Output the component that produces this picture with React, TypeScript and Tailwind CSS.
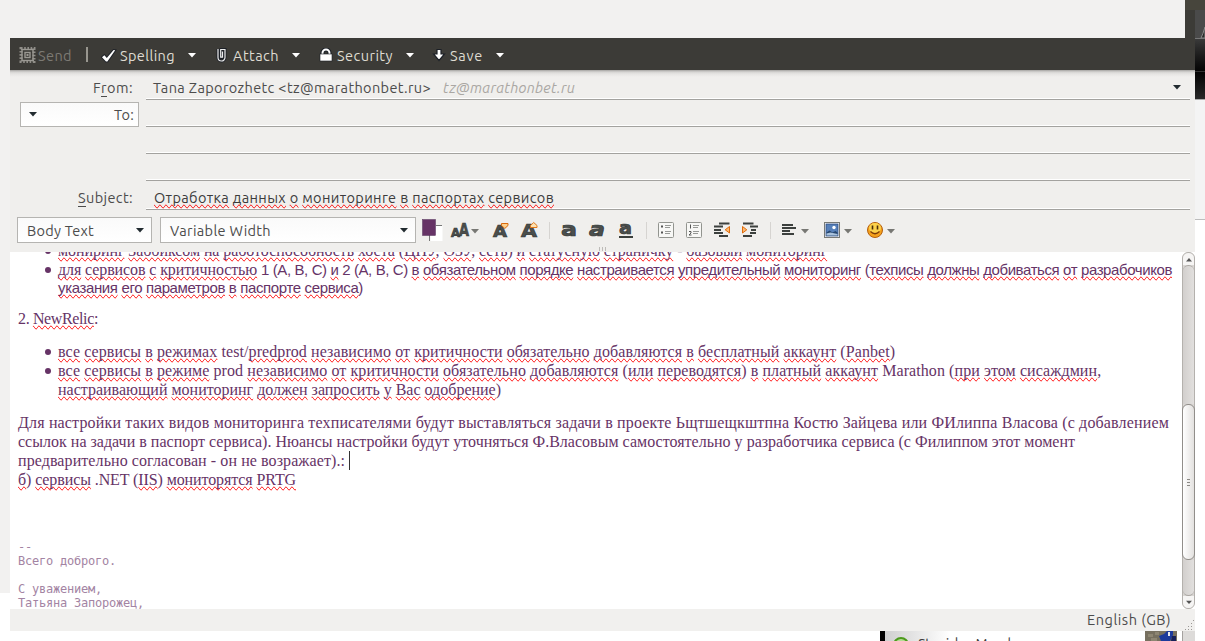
import React, { useLayoutEffect, useRef, useState } from 'react';

interface FitProps {
  width: number;
  className?: string;
  children: React.ReactNode;
}

// Tracks the text so that it fills exactly `width` pixels
function Fit({ width, className = '', children }: FitProps) {
  const ref = useRef<HTMLSpanElement>(null);
  const [spacing, setSpacing] = useState(0);

  useLayoutEffect(() => {
    const el = ref.current;
    if (!el) return;
    el.style.letterSpacing = '0px';
    const natural = el.getBoundingClientRect().width;
    const count = el.textContent?.length || 1;
    const next = (width - natural) / count;
    el.style.letterSpacing = `${next}px`;
    setSpacing(next);
  }, [width]);

  return (
    <span ref={ref} className={`inline-block whitespace-pre ${className}`} style={{ letterSpacing: spacing }}>
      {children}
    </span>
  );
}

const KNOWN_WORDS = ['test', 'prod', 'Marathon', 'NET', 'A', 'B', 'C'];

function Spelled({ text }: { text: string }) {
  return (
    <>
      {text.split(/([A-Za-zА-Яа-яёЁ]+)/).map((part, i) =>
        i % 2 === 1 && !KNOWN_WORDS.includes(part) ? (
          <span key={i} className="[text-decoration-line:spelling-error]">{part}</span>
        ) : (
          <React.Fragment key={i}>{part}</React.Fragment>
        )
      )}
    </>
  );
}

function Caret({ className = '', color = '#ffffff' }: { className?: string; color?: string }) {
  return (
    <svg className={`shrink-0 ${className}`} width="8" height="5" viewBox="0 0 8 5">
      <path d="M0 0h8L4 4.6z" fill={color} />
    </svg>
  );
}

function ToolSeparator({ className = '' }: { className?: string }) {
  return <div className={`h-[17px] w-px shrink-0 bg-[#d6d4d1] ${className}`} />;
}

function MainToolbar() {
  const label = 'h-5 leading-5 text-[#dfdbd2]';
  return (
    <div className="flex h-8 items-center bg-[#3c3b37] pt-[4px] pl-[9px] text-[14.5px]">
      <svg width="17" height="16" viewBox="0 0 17 16" fill="none" className="mb-[2px] shrink-0">
        <rect x="2" y="1.500" width="13" height="13" stroke="#8f8d88" strokeWidth="3" strokeDasharray="1.600 1.600" />
        <rect x="3" y="2.500" width="11" height="11" stroke="#9b9993" strokeWidth="1.400" />
        <rect x="6" y="5.500" width="5" height="5" stroke="#9b9993" strokeWidth="1.400" />
        <rect x="7.500" y="7" width="2" height="2" fill="#9b9993" />
      </svg>
      <Fit width={34} className="ml-[2px] h-5 leading-5 text-[#7c7a74]">Send</Fit>
      <div className="mb-[4px] ml-[14px] h-[15px] w-[2px] bg-[#98968f]" />
      <svg className="ml-[13px] shrink-0" width="16" height="14" viewBox="0 0 16 14">
        <path d="M1 8.2 3.4 6.2 5.8 9 12.6 1l1.6.2L6.4 12.6H5z" fill="#fff" stroke="#22252a" strokeWidth="2" paintOrder="stroke" />
      </svg>
      <Fit width={55} className={`ml-[3px] ${label}`}>Spelling</Fit>
      <Caret className="mb-[2px] ml-[13px]" />
      <svg className="mb-px ml-[20px] shrink-0" width="11" height="15" viewBox="0 0 11 15" fill="none">
        <path d="M2 1v8.5a3.5 3.5 0 0 0 7 0V1H5v8.5h1.500V3" stroke="#1c2027" strokeWidth="3" />
        <path d="M2 1v8.500a3.500 3.500 0 0 0 7 0V1.500H4.700v7.600h1.800V3.500" stroke="#eee" strokeWidth="1.200" />
      </svg>
      <Fit width={46} className={`ml-[6px] ${label}`}>Attach</Fit>
      <Caret className="mb-[2px] ml-[13px]" />
      <svg className="mb-[2px] ml-[19px] shrink-0" width="14" height="14" viewBox="0 0 14 14">
        <path d="M3.500 7V5a3.500 3.500 0 0 1 7 0v2" fill="none" stroke="#1c2027" strokeWidth="4" />
        <path d="M3.500 7V5a3.500 3.500 0 0 1 7 0v2" fill="none" stroke="#fff" strokeWidth="2" />
        <rect x="1" y="6" width="12" height="7" fill="#fff" stroke="#1c2027" strokeWidth=".6" />
      </svg>
      <Fit width={56} className={`ml-[4px] ${label}`}>Security</Fit>
      <Caret className="mb-[2px] ml-[13px]" />
      <svg className="mb-[2px] ml-[18px] shrink-0" width="14" height="14" viewBox="0 0 14 14">
        <path d="M5 1.500h4V6h3.500L7 12.500 1.500 6H5z" fill="#fff" stroke="#1c2027" strokeWidth="1.200" />
      </svg>
      <Fit width={33} className={`ml-[4px] ${label}`}>Save</Fit>
      <Caret className="mb-[2px] ml-[13px]" />
    </div>
  );
}

function Field({ className, children }: { className: string; children?: React.ReactNode }) {
  return (
    <div className={`ml-[13px] flex w-[1044px] items-center border-b border-[#a3a29f] shadow-[inset_0_-1px_0_#ffffff] ${className}`}>
      {children}
    </div>
  );
}

function Headers() {
  return (
    <div className="flex flex-col">
      <div className="flex h-[30px]">
        <div className="w-[123px] pt-[7px] text-right leading-[21px]">
          <Fit width={40}>F<span className="border-b border-[#4c4c4c]">r</span>om:</Fit>
        </div>
        <Field className="pt-[7px] pb-px pl-[7px] leading-[20px]">
          <Fit width={278}>{'Tana Zaporozhetc <tz@marathonbet.ru>'}</Fit>
          <Fit width={132} className="ml-[12px] text-[#aaa7a3] italic">tz@marathonbet.ru</Fit>
          <Caret color="#222b30" className="mr-[9px] ml-auto" />
        </Field>
      </div>
      <div className="flex h-[27px]">
        <div className="w-[123px] pt-[2px] pl-[10px]">
          <div className="flex h-[25px] w-[119px] items-center justify-between border border-[#b5b4b1] bg-linear-to-b from-[#fafafa] to-[#fff] pr-[4px] pl-[8px]">
            <Caret color="#222b30" />
            <Fit width={20}>To:</Fit>
          </div>
        </div>
        <Field className="" />
      </div>
      <div className="flex h-[27px] pl-[123px]"><Field className="" /></div>
      <div className="flex h-[27px] pl-[123px]"><Field className="" /></div>
      <div className="flex h-[29px]">
        <div className="w-[123px] pt-[6px] text-right leading-[21px]">
          <Fit width={55}><span className="border-b border-[#4c4c4c]">S</span>ubject:</Fit>
        </div>
        <Field className="pt-[5px] pl-[8px] leading-[20px] text-[#3c3c3c]">
          <Fit width={400}>
            <Spelled text="Отработка данных о мониторинге в паспортах сервисов" />
          </Fit>
        </Field>
      </div>
    </div>
  );
}

function Select({ label, textWidth, className }: { label: string; textWidth: number; className: string }) {
  return (
    <div className={`flex h-[26px] shrink-0 items-center justify-between border border-[#b5b4b1] bg-linear-to-b from-[#fafafa] to-[#fff] pt-px pr-[7px] pl-[9px] ${className}`}>
      <Fit width={textWidth}>{label}</Fit>
      <Caret color="#222b30" className="mb-px" />
    </div>
  );
}

// Small svg wrapper shared by the 16px formatting icons
function Icon({ className = '', children }: { className?: string; children: React.ReactNode }) {
  return (
    <svg className={`shrink-0 overflow-visible ${className}`} width="16" height="16" viewBox="0 0 16 16" fill="none">
      {children}
    </svg>
  );
}

const glyph = {
  fontFamily: 'DejaVu Sans',
  fontWeight: 700,
  fill: '#4b4f4d',
  stroke: '#353837',
  strokeWidth: 0.7,
};

function FormatToolbar() {
  return (
    <div className="flex h-[42px] items-start pt-[7px] pl-[7px]">
      <Select label="Body Text" textWidth={67} className="w-[135px]" />
      <Select label="Variable Width" textWidth={101} className="ml-[8px] w-[256px]" />
      <div className="flex h-[26px] items-center">
        <svg className="ml-[6px] shrink-0" width="22" height="25" viewBox="0 0 22 25">
          <path d="M8.500 8h12v15h-12z" fill="#fff" />
          <path d="M7.500 17v6M14 7.500h6" stroke="#777" />
          <rect x=".5" y="1.500" width="13" height="16" fill="#663366" stroke="#52305a" strokeWidth=".5" />
        </svg>
        <Icon className="ml-[7px]">
          <text x="0" y="15" fontSize="13" textLength="9" lengthAdjust="spacingAndGlyphs" {...glyph}>A</text>
          <text x="8" y="14" fontSize="17" textLength="10" lengthAdjust="spacingAndGlyphs" {...glyph}>A</text>
        </Icon>
        <Caret color="#777773" className="mt-[3px] ml-[4px]" />
        <Icon className="ml-[14px]">
          <text x="0" y="14.500" fontSize="16" textLength="14" lengthAdjust="spacingAndGlyphs" {...glyph}>A</text>
          <path d="M8.500 1.500h6.500v2l-3.200 3-3.300-3z" fill="#fbd08e" stroke="#d9690c" />
        </Icon>
        <Icon className="ml-[12px]">
          <text x="0" y="15" fontSize="18" textLength="16" lengthAdjust="spacingAndGlyphs" {...glyph}>A</text>
          <path d="M9.500 5.500v-2l3.200-3 3.300 3v2z" fill="#fce2b4" stroke="#e07818" />
        </Icon>
        <ToolSeparator className="ml-[12px]" />
        <Icon className="ml-[11px]">
          <text x="0" y="13.500" fontSize="20" textLength="16" lengthAdjust="spacingAndGlyphs" {...glyph}>a</text>
        </Icon>
        <Icon className="ml-[12px]">
          <text x="0" y="13.500" fontSize="20" fontStyle="italic" textLength="16" lengthAdjust="spacingAndGlyphs" {...glyph}>a</text>
        </Icon>
        <Icon className="ml-[13px]">
          <text x="1" y="12" fontSize="18" textLength="13" lengthAdjust="spacingAndGlyphs" {...glyph}>a</text>
          <path d="M1 15h14" stroke="#3b3f3c" strokeWidth="2" />
        </Icon>
        <ToolSeparator className="ml-[12px]" />
        <Icon className="ml-[11px]">
          <rect x=".5" y=".5" width="15" height="15" rx="1" fill="#f7f7f5" stroke="#92948f" />
          <path d="M3 4.500h2M3 10.500h2" stroke="#555" strokeWidth="2" />
          <path d="M7 3.500h6M7 5.500h5M7 9.500h6M7 11.500h5" stroke="#969895" />
        </Icon>
        <Icon className="ml-[12px]">
          <rect x=".5" y=".5" width="15" height="15" rx="1" fill="#f7f7f5" stroke="#92948f" />
          <path d="M4.500 2.500v4M3 9.500h2v1.500l-2 2h2.500" stroke="#555" />
          <path d="M7 3.500h6M7 5.500h5M7 9.500h6M7 11.500h5" stroke="#969895" />
        </Icon>
        <Icon className="ml-[12px]">
          <path d="M5 1.500h10.500M0 4.500h9M0 8h7M0 11h9M5 14h9" stroke="#3c403e" strokeWidth="2" />
          <path d="M15.500 4.500v6.500l-4.300-3.200z" fill="#fbb871" stroke="#e06c0c" />
        </Icon>
        <Icon className="ml-[12px]">
          <path d="M1 1.500h10.500M8 4.500h8M9 8h5M8 11h6M1 14h9" stroke="#3c403e" strokeWidth="2" />
          <path d="M.5 4.500v6.500l4.300-3.200z" fill="#fbb871" stroke="#e06c0c" />
        </Icon>
        <ToolSeparator className="ml-[12px]" />
        <Icon className="ml-[11px]">
          <path d="M0 3h11M0 6h14M0 9h8M0 12h12" stroke="#3c403e" strokeWidth="2" />
        </Icon>
        <Caret color="#777773" className="mt-[3px] ml-[3px]" />
        <Icon className="ml-[15px]">
          <rect x=".5" y=".5" width="15" height="15" fill="#fff" stroke="#777975" />
          <rect x="2" y="2" width="12" height="12" fill="#5680ba" stroke="#2d4c80" strokeWidth=".8" />
          <path d="M2.500 13.500v-3l3-2 3 2 3-1.500 2 1.500v3z" fill="#26466f" />
          <path d="M2.500 13.500v-2l4-1 7 1.500v1.500z" fill="#a9c2dc" />
          <circle cx="10" cy="5.500" r="1.700" fill="#fff" />
        </Icon>
        <Caret color="#777773" className="mt-[3px] ml-[4px]" />
        <Icon className="ml-[15px]">
          <circle cx="8" cy="8" r="7.500" fill="#f5a11c" stroke="#b5600e" />
          <ellipse cx="8" cy="6" rx="6" ry="5" fill="#fcd24c" />
          <path d="M5.500 3.500v4M10.500 3.500v4" stroke="#4a2c0a" strokeWidth="1.600" />
          <path d="M3.500 9.500q4.500 4.500 9 0" stroke="#7a3a08" strokeWidth="1.200" />
        </Icon>
        <Caret color="#777773" className="mt-[3px] ml-[4px]" />
      </div>
    </div>
  );
}

interface LineProps {
  width: number;
  text: string;
  spelled?: boolean;
}

function SerifLine({ width, text, spelled = true }: LineProps) {
  return (
    <div className="flex h-[19px] leading-[19px]">
      <Fit width={width}>{spelled ? <Spelled text={text} /> : text}</Fit>
    </div>
  );
}

function Bullet({ children }: { children: React.ReactNode }) {
  return (
    <li className="flex">
      <div className="mt-[7px] mr-[7px] ml-[27px] size-[6px] shrink-0 rounded-full bg-[#663366]" />
      <div>{children}</div>
    </li>
  );
}

function MessageBody() {
  return (
    <div className="h-[357px] w-[1172px] overflow-hidden bg-white pl-[8px] font-['Century_Schoolbook_L','Liberation_Serif',serif] text-[16px] text-[#663366]">
      <ul className="-mt-[11px]">
        <Bullet>
          <SerifLine width={769} text="мониринг Заббиксом на работоспособность хоста (ЦПУ, ОЗУ, сеть) и статусную страничку - базовый мониторинг" />
        </Bullet>
        <Bullet>
          <div className="flex h-[19px] leading-[19px]">
            <Fit width={203}><Spelled text="для сервисов с критичностью " /></Fit>
            <Fit width={911} className="font-['Liberation_Sans',sans-serif] text-[15px]">
              <Spelled text="1 (A, B, C) и 2 (A, B, C) в обязательном порядке настраивается упредительный мониторинг (техписы должны добиваться от разрабочиков" />
            </Fit>
          </div>
          <div className="flex h-[18px] font-['Liberation_Sans',sans-serif] text-[15px] leading-[18px]">
            <Fit width={305}><Spelled text="указания его параметров в паспорте сервиса)" /></Fit>
          </div>
        </Bullet>
      </ul>
      <div className="mt-[12px]"><SerifLine width={80} text="2. NewRelic:" /></div>
      <ul className="mt-[14px]">
        <Bullet>
          <SerifLine width={837} text="все сервисы в режимах test/predprod независимо от критичности обязательно добавляются в бесплатный аккаунт (Panbet)" />
        </Bullet>
        <Bullet>
          <SerifLine width={1043} text="все сервисы в режиме prod независимо от критичности обязательно добавляются (или переводятся) в платный аккаунт Marathon (при этом сисаждмин," />
          <SerifLine width={443} text="настраивающий мониторинг должен запросить у Вас одобрение)" />
        </Bullet>
      </ul>
      <div className="mt-[14px]">
        <SerifLine width={1151} spelled={false} text="Для настройки таких видов мониторинга техписателями будут выставляться задачи в проекте Ьщтшещкштпна Костю Зайцева или ФИлиппа Власова (с добавлением" />
        <SerifLine width={1057} spelled={false} text="ссылок на задачи в паспорт сервиса). Нюансы настройки будут уточняться Ф.Власовым самостоятельно у разработчика сервиса (с Филиппом этот момент" />
        <div className="flex">
          <SerifLine width={327} spelled={false} text="предварительно согласован - он не возражает).:" />
          <div className="ml-[4px] h-[19px] w-px bg-[#333]" />
        </div>
        <SerifLine width={278} text="б) сервисы .NET (IIS) мониторятся PRTG" />
      </div>
      <pre className="mt-[51px] font-['DejaVu_Sans_Mono',monospace] text-[12px] leading-[14px] tracking-[-0.22px] text-[#a384a3]">
        {'--\nВсего доброго.\n\nС уважением,\nТатьяна Запорожец,'}
      </pre>
    </div>
  );
}

function Scrollbar() {
  return (
    <div className="flex h-[357px] w-[13px] flex-col rounded-[6px] border border-[#b4b1ad] bg-[#d9d6d3]">
      <div className="flex h-[12px] items-center justify-center rounded-t-[6px] bg-[#f6f5f4]">
        <Caret color="#555" className="w-[6px] rotate-180" />
      </div>
      <div className="h-[139px] rounded-t-[6px] border-t border-[#aaa7a3] bg-linear-to-r from-[#d2cfcd] to-[#e2e0de]" />
      <div className="-mx-px flex h-[156px] flex-col items-center justify-center gap-[2px] rounded-[6px] border border-[#918e8a] bg-linear-to-r from-[#ffffff] to-[#e3e1df]">
        <div className="h-px w-[3px] bg-[#8b8985]" />
        <div className="h-px w-[3px] bg-[#8b8985]" />
        <div className="h-px w-[3px] bg-[#8b8985]" />
      </div>
      <div className="h-[36px] rounded-b-[6px] border-b border-[#aaa7a3] bg-linear-to-r from-[#d2cfcd] to-[#e2e0de]" />
      <div className="flex flex-1 items-center justify-center rounded-b-[6px] bg-[#f6f5f4]">
        <Caret color="#555" className="w-[6px]" />
      </div>
    </div>
  );
}

function StatusBar() {
  return (
    <div className="flex h-[22px] items-center justify-end bg-[#f1f0ee] text-[#4c4c4c]">
      <Fit width={84}>English (GB)</Fit>
      <svg className="ml-[13px] self-end" width="11" height="12" viewBox="0 0 11 12">
        <path d="M9 1.500h1M7 4.500h3M4 7.500h6M1 10.500h9" stroke="#9b9895" strokeDasharray="1 2" />
      </svg>
    </div>
  );
}

// The chat window that peeks out under the composer
function ChatStrip() {
  return (
    <div className="flex h-[10px] overflow-hidden pl-[880px]">
      <div className="w-[5px] bg-black" />
      <div className="flex w-[260px] bg-linear-to-r from-[#cfcfcf] to-white to-25%">
        <div className="mt-[6px] ml-[8px] size-[16px] shrink-0 rounded-full border-2 border-[#4c9a1c] bg-[#b5dd94]" />
        <Fit width={106} className="ml-[9px] pt-[3px] leading-[20px] text-[#3c3c3c]">Stanislav Mandro</Fit>
      </div>
      <svg width="32" height="10" viewBox="0 0 32 10">
        <path d="M0 0h32v10H0z" fill="#77705f" />
        <path d="M3 3h5v3H3zM10 1h4v3h-4zM6 7h6v3H6z" fill="#8e8672" />
        <path d="M14 5l5-2 3-3h6v4l-3 6h-9z" fill="#1c3a9c" />
        <path d="M23 1h2v4h-2z" fill="#e8e8ee" />
        <path d="M27 5h4v5h-5z" fill="#16205a" />
      </svg>
      <div className="ml-[5px] w-[13px] border-l border-[#a5a29f] bg-[#dddbd9]" />
    </div>
  );
}

// Edge of the desktop to the right of the composer
function DesktopEdge() {
  return (
    <div className="flex h-[641px] w-[10px] flex-col bg-white">
      <div className="h-[10px] bg-[#47453c]" />
      <svg width="10" height="28" viewBox="0 0 10 28">
        <path d="M0 0h10v28H0z" fill="#4a4a4a" />
        <path d="M6 28Q8 24 10 17V28z" fill="#2c2c2c" stroke="#8b8b8b" />
        <path d="M0 0v4Q0 0-1 0z" fill="#000" />
      </svg>
      <div className="h-[33px] border-t border-[#777] bg-linear-to-b from-[#3a3a3a] to-[#050505]" />
      <div className="h-[28px] border-t border-[#333] bg-linear-to-b from-[#050505] to-[#292929]" />
      <div className="h-[121px] border-y border-t-[#aaa] border-b-[#bdbdbd] bg-[#f4f4f4]" />
    </div>
  );
}

export default function App() {
  return (
    <div className="flex h-[641px] w-[1205px] overflow-hidden bg-white font-[Ubuntu,'Open_Sans',sans-serif] text-[14.5px] text-[#4c4c4c]">
      <div className="flex w-[1195px] flex-col">
        <div className="flex h-[38px]">
          <div className="w-[1185px] bg-[#f2f1f0]" />
          <div className="w-[10px] border-t-[10px] border-[#47453c] bg-[#3c3b37]" />
        </div>
        <div className="flex h-[593px]">
          <div className="h-[555px] w-[10px] bg-[#f2f1f0]" />
          <div className="flex w-[1185px] flex-col">
            <MainToolbar />
            <div className="h-[182px] bg-[#f0efed] bg-[linear-gradient(#a5a4a1,#d5d4d2_2px,#e6e5e3_4px,#f0efed_7px)]">
              <Headers />
              <FormatToolbar />
              <div className="-mt-[5px] ml-[589px] flex gap-[2px]">
                <div className="h-[4px] w-px bg-[#bdbbb8]" />
                <div className="h-[4px] w-px bg-[#bdbbb8]" />
                <div className="h-[4px] w-px bg-[#bdbbb8]" />
              </div>
            </div>
            <div className="flex">
              <MessageBody />
              <Scrollbar />
            </div>
            <StatusBar />
          </div>
        </div>
        <ChatStrip />
      </div>
      <DesktopEdge />
    </div>
  );
}
